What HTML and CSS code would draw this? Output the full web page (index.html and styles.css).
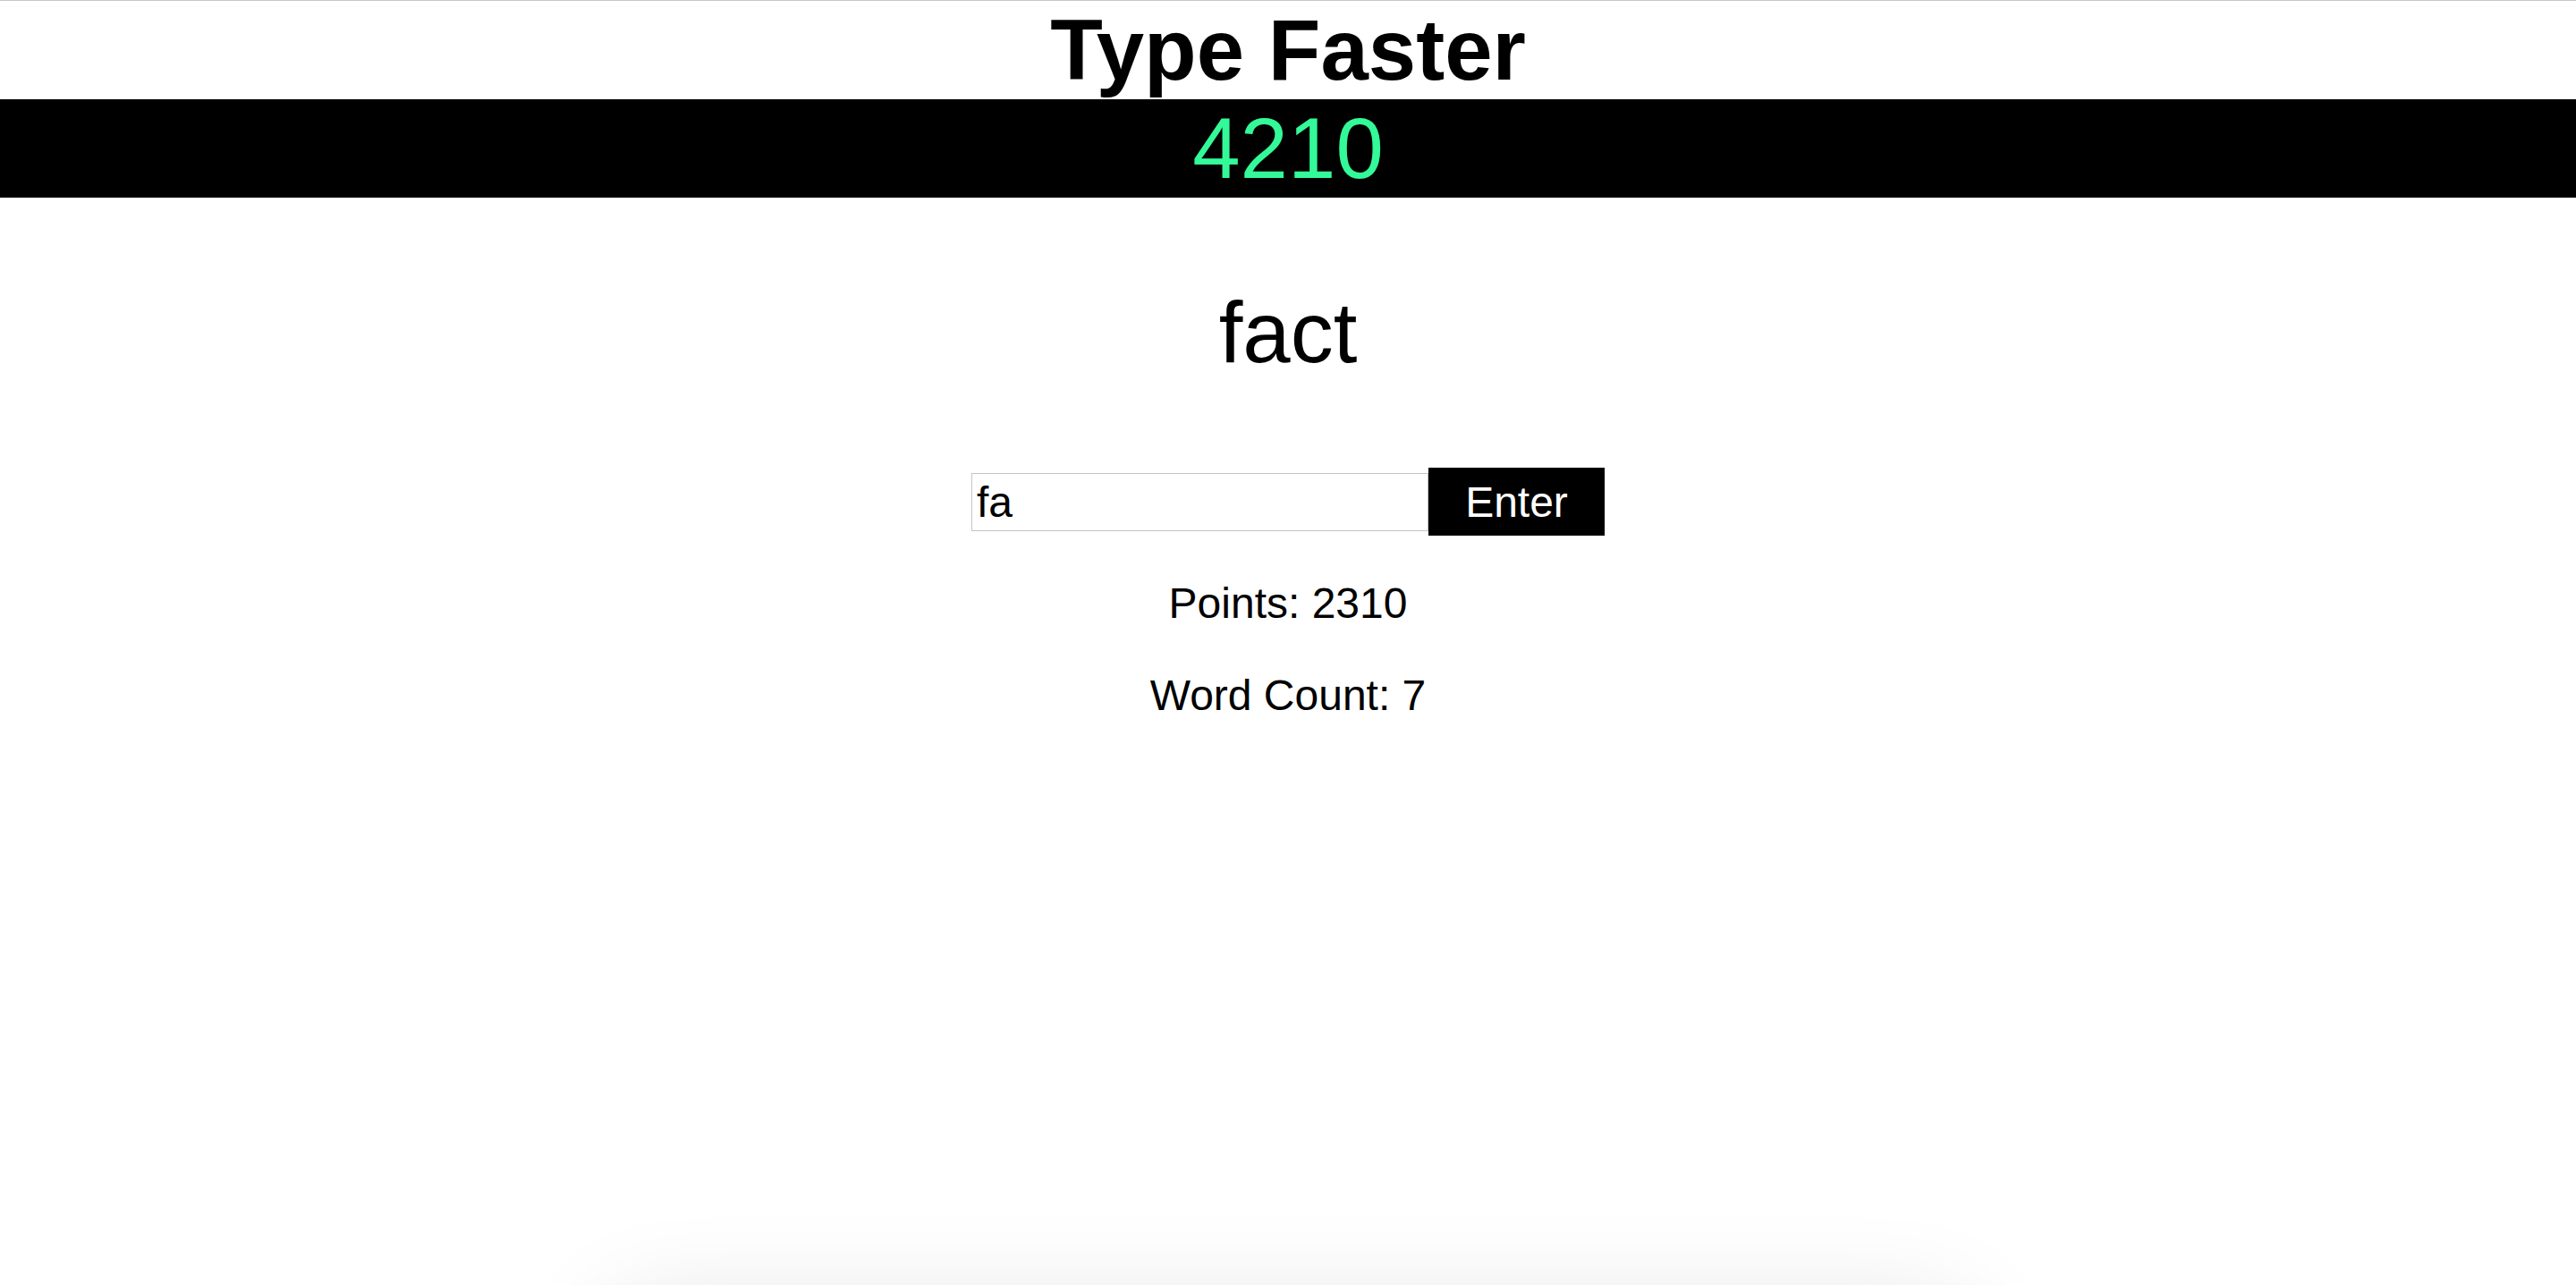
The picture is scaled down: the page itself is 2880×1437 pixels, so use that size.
FILE: index.html
```html
<!DOCTYPE html>
<html lang="en">
<head>
<meta charset="utf-8">
<title>Type Faster</title>
<link rel="stylesheet" href="styles.css">
</head>
<body>
<h1 class="title">Type Faster</h1>
<div class="timer">4210</div>
<main class="game">
  <p class="word">fact</p>
  <form class="entry">
    <input class="entry-input" type="text" value="fa">
    <button class="entry-button" type="button">Enter</button>
  </form>
  <p class="stat">Points: 2310</p>
  <p class="stat">Word Count: 7</p>
  <div class="panel"></div>
</main>
</body>
</html>
```

FILE: styles.css
```css
html, body {
  margin: 0;
  padding: 0;
  background: #fff;
}
body {
  border-top: 1px solid #c6c6c6;
  font-family: "Liberation Sans", Arial, sans-serif;
  color: #000;
  overflow: hidden;
}
.title {
  margin: 0;
  font-size: 96px;
  line-height: 110px;
  font-weight: bold;
  text-align: center;
}
.timer {
  background: #000;
  color: #33f999;
  font-size: 96px;
  line-height: 110px;
  height: 110px;
  text-align: center;
}
.game {
  display: flex;
  flex-direction: column;
  align-items: center;
}
.word {
  margin: 96px 0;
  font-size: 96px;
  line-height: 110px;
}
.entry {
  display: flex;
  align-items: center;
  justify-content: center;
  margin: 0;
}
.entry-input {
  box-sizing: border-box;
  width: 511px;
  height: 65px;
  margin: 0;
  padding: 0 5px;
  border: 1px solid #c4c4c4;
  border-radius: 0;
  outline: none;
  font-family: "Liberation Sans", Arial, sans-serif;
  font-size: 48px;
  color: #000;
  background: #fff;
}
.entry-button {
  box-sizing: border-box;
  width: 197px;
  height: 76px;
  margin: 0;
  padding: 0;
  border: none;
  border-radius: 0;
  background: #000;
  color: #fff;
  font-family: "Liberation Sans", Arial, sans-serif;
  font-size: 48px;
}
.stat {
  margin: 48px 0 0;
  font-size: 48px;
  line-height: 55px;
}
.panel {
  width: 1500px;
  height: 300px;
  margin-top: 665px;
  background: #fff;
  box-shadow: 0 0 120px rgba(0, 0, 0, 0.14);
}
```
